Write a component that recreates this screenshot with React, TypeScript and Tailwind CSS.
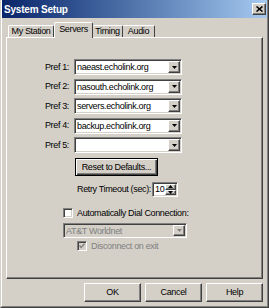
const sunken =
  "border border-t-[#808080] border-l-[#808080] border-b-white border-r-white shadow-[inset_1px_1px_0_#404040,inset_-1px_-1px_0_#d4d0c8]";
const raised =
  "border border-t-white border-l-white border-b-[#404040] border-r-[#404040] shadow-[inset_-1px_-1px_0_#808080]";

function DownArrow({ color = "#000" }: { color?: string }) {
  return (
    <svg width="5" height="3" viewBox="0 0 5 3">
      <path d="M0 0h5L2.5 3z" fill={color} />
    </svg>
  );
}

function Combo({ value, className, disabled }: { value: string; className: string; disabled?: boolean }) {
  return (
    <div className={`${sunken} ${className} flex p-px ${disabled ? "bg-[#d4d0c8]" : "bg-white"}`}>
      <span className={`flex-1 truncate pl-px leading-[12px] ${disabled ? "text-[#808080]" : "text-black"}`}>{value}</span>
      <div className={`${raised} w-[12px] bg-[#d4d0c8] flex items-center justify-center`}>
        <DownArrow color={disabled ? "#808080" : "#000"} />
      </div>
    </div>
  );
}

function Check({ checked, disabled }: { checked?: boolean; disabled?: boolean }) {
  return (
    <div className={`${sunken} w-[10px] h-[10px] flex items-center justify-center ${disabled ? "bg-[#d4d0c8]" : "bg-white"}`}>
      {checked && (
        <svg width="6" height="6" viewBox="0 0 6 6">
          <path d="M0.5 2.5 L2.2 4.5 L5.5 0.8" stroke={disabled ? "#808080" : "#000"} strokeWidth="1.4" fill="none" />
        </svg>
      )}
    </div>
  );
}

const prefs = ["naeast.echolink.org", "nasouth.echolink.org", "servers.echolink.org", "backup.echolink.org", ""];

export default function App() {
  return (
    <div className="w-[269px] h-[308px] bg-[#d4d0c8] border-l border-r border-b border-l-[#d4d0c8] border-r-[#404040] border-b-[#404040] font-['Liberation_Sans',Arial,sans-serif] text-[9px] tracking-[-0.35px] text-black">
      <div className="h-full flex flex-col border-l border-r border-b border-l-white border-r-[#808080] border-b-[#808080]">
        {/* title bar */}
        <div className="h-[18px] flex items-center justify-between bg-linear-to-r from-[#0a246a] to-[#a6caf0] pl-[2px] pr-px">
          <span className="text-white font-bold text-[10px] tracking-[-0.2px]">System Setup</span>
          <div className={`${raised} w-[14px] h-[12px] bg-[#d4d0c8] flex items-center justify-center`}>
            <svg width="7" height="6" viewBox="0 0 7 6">
              <path d="M0.5 0.5 L6.5 5.5 M6.5 0.5 L0.5 5.5" stroke="#000" strokeWidth="1.6" />
            </svg>
          </div>
        </div>

        <div className="flex-1 flex flex-col px-[4px] pb-[4px]">
          {/* tabs */}
          <div className="mt-[4px] h-[15px] flex items-end pl-[2px] whitespace-nowrap">
            <div className="w-[46px] h-[12px] border-t border-l border-r border-t-white border-l-white border-r-[#404040] rounded-t-[2px] flex items-center justify-center leading-none">
              My Station
            </div>
            <div className="relative z-10 w-[39px] h-[16px] -mb-px bg-[#d4d0c8] border-t border-l border-r border-t-white border-l-white border-r-[#404040] rounded-t-[2px] flex items-start justify-center pt-[2px] leading-none">
              Servers
            </div>
            <div className="w-[30px] h-[12px] border-t border-r border-t-white border-r-[#404040] rounded-t-[2px] flex items-center justify-center leading-none">
              Timing
            </div>
            <div className="w-[32px] h-[12px] border-t border-r border-t-white border-r-[#404040] rounded-t-[2px] flex items-center justify-center leading-none">
              Audio
            </div>
          </div>

          {/* panel */}
          <div className="h-[242px] border border-t-white border-l-white border-b-[#404040] border-r-[#404040] shadow-[inset_-1px_-1px_0_#808080] flex flex-col items-start pt-[21px] whitespace-nowrap">
            <div className="flex flex-col gap-[3.5px] ml-[33px]">
              {prefs.map((p, i) => (
                <div key={i} className="flex items-center">
                  <span className="w-[29px] text-right mr-[5px] leading-none">Pref {i + 1}:</span>
                  <Combo value={p} className="w-[108px] h-[16px]" />
                </div>
              ))}
            </div>

            <div className="ml-[68px] mt-[5px] w-[83px] h-[18px] border border-black shadow-[inset_1px_1px_0_#fff,inset_-1px_-1px_0_#404040,inset_-2px_-2px_0_#808080] flex items-center justify-center leading-none">
              Reset to Defaults...
            </div>

            <div className="ml-[70px] mt-[6px] flex items-center">
              <span className="w-[75px] leading-none">Retry Timeout (sec):</span>
              <div className={`${sunken} w-[26px] h-[15px] bg-white flex p-px`}>
                <span className="flex-1 leading-[11px] pl-px">10</span>
                <div className="w-[11px] flex flex-col">
                  <div className={`${raised} flex-1 bg-[#d4d0c8] flex items-center justify-center`}>
                    <svg width="5" height="3" viewBox="0 0 5 3">
                      <path d="M0 3h5L2.5 0z" fill="#000" />
                    </svg>
                  </div>
                  <div className={`${raised} flex-1 bg-[#d4d0c8] flex items-center justify-center`}>
                    <DownArrow />
                  </div>
                </div>
              </div>
            </div>

            <div className="ml-[56px] mt-[11px] h-[10px] flex items-center">
              <Check />
              <span className="ml-[4px] leading-none">Automatically Dial Connection:</span>
            </div>

            <Combo value="AT&T Worldnet" className="ml-[56px] mt-[5px] w-[124px] h-[15px]" disabled />

            <div className="ml-[70px] mt-[3px] h-[10px] flex items-center">
              <Check checked disabled />
              <span className="ml-[4px] leading-none text-[#808080]">Disconnect on exit</span>
            </div>
          </div>

          {/* buttons */}
          <div className="mt-[4px] flex justify-end gap-[4px]">
            {["OK", "Cancel", "Help"].map((b) => (
              <div key={b} className={`${raised} w-[57px] h-[19px] flex items-center justify-center leading-none`}>
                {b}
              </div>
            ))}
          </div>
        </div>
      </div>
    </div>
  );
}
